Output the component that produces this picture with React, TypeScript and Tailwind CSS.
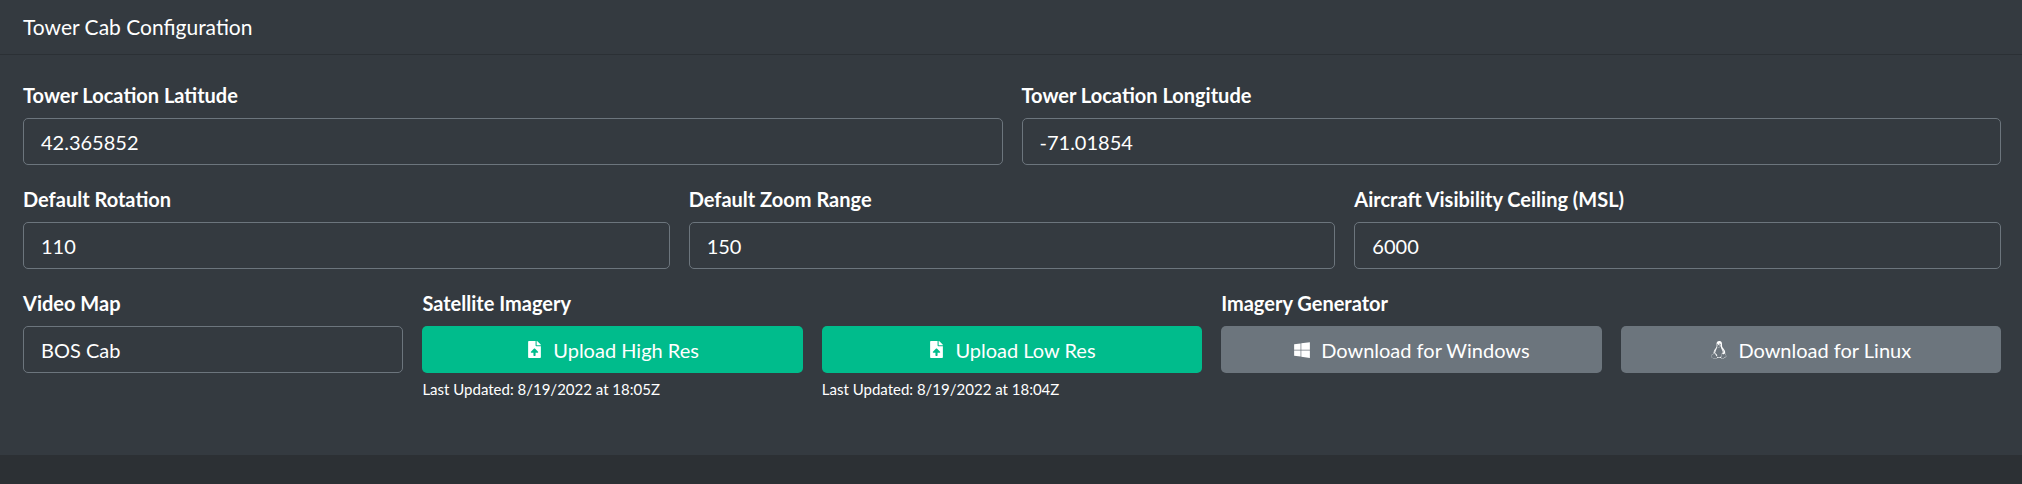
import { FaFileUpload, FaWindows, FaLinux } from "react-icons/fa";

const font = { fontFamily: "'Source Sans Pro', Lato, 'Noto Sans', sans-serif" };

const Field = ({ label, value }: { label: string; value: string }) => (
  <div className="flex flex-col">
    <label className="text-[20px] font-bold leading-[26px] mb-[10px]">{label}</label>
    <div className="h-[47px] border border-[#6c757d] rounded-[5px] px-[17px] flex items-center text-[20px]">
      {value}
    </div>
  </div>
);

const Btn = ({ icon, text, green, note }: { icon: React.ReactNode; text: string; green?: boolean; note?: string }) => (
  <div className="flex flex-col">
    <button
      className={`h-[47px] rounded-[5px] flex items-center justify-center gap-[10px] text-[20px] text-white ${
        green ? "bg-[#00bc8c]" : "bg-[#6c757d]"
      }`}
    >
      {icon}
      {text}
    </button>
    {note && <div className="text-[15px] mt-[6px] leading-[20px]">{note}</div>}
  </div>
);

export default function App() {
  return (
    <div className="w-[2022px] h-[484px] bg-[#2c3034] text-[#fff]" style={font}>
      <div className="bg-[#343a40] h-[455px]">
        <div className="h-[55px] border-b border-[#2b3035] px-[23px] flex items-center text-[21px]">
          Tower Cab Configuration
        </div>
        <div className="pl-[23px] pr-[21px] pt-[27px] flex flex-col gap-[21px]">
          <div className="grid grid-cols-2 gap-[19px]">
            <Field label="Tower Location Latitude" value="42.365852" />
            <Field label="Tower Location Longitude" value="-71.01854" />
          </div>
          <div className="grid grid-cols-3 gap-[19px]">
            <Field label="Default Rotation" value="110" />
            <Field label="Default Zoom Range" value="150" />
            <Field label="Aircraft Visibility Ceiling (MSL)" value="6000" />
          </div>
          <div className="grid grid-cols-5 gap-[19px]">
            <Field label="Video Map" value="BOS Cab" />
            <div className="flex flex-col">
              <label className="text-[20px] font-bold leading-[26px] mb-[10px]">Satellite Imagery</label>
              <Btn green icon={<FaFileUpload size={17} />} text="Upload High Res" note="Last Updated: 8/19/2022 at 18:05Z" />
            </div>
            <div className="flex flex-col">
              <label className="text-[20px] leading-[26px] mb-[10px]">&nbsp;</label>
              <Btn green icon={<FaFileUpload size={17} />} text="Upload Low Res" note="Last Updated: 8/19/2022 at 18:04Z" />
            </div>
            <div className="flex flex-col">
              <label className="text-[20px] font-bold leading-[26px] mb-[10px]">Imagery Generator</label>
              <Btn icon={<FaWindows size={18} />} text="Download for Windows" />
            </div>
            <div className="flex flex-col">
              <label className="text-[20px] leading-[26px] mb-[10px]">&nbsp;</label>
              <Btn icon={<FaLinux size={18} />} text="Download for Linux" />
            </div>
          </div>
        </div>
      </div>
    </div>
  );
}
